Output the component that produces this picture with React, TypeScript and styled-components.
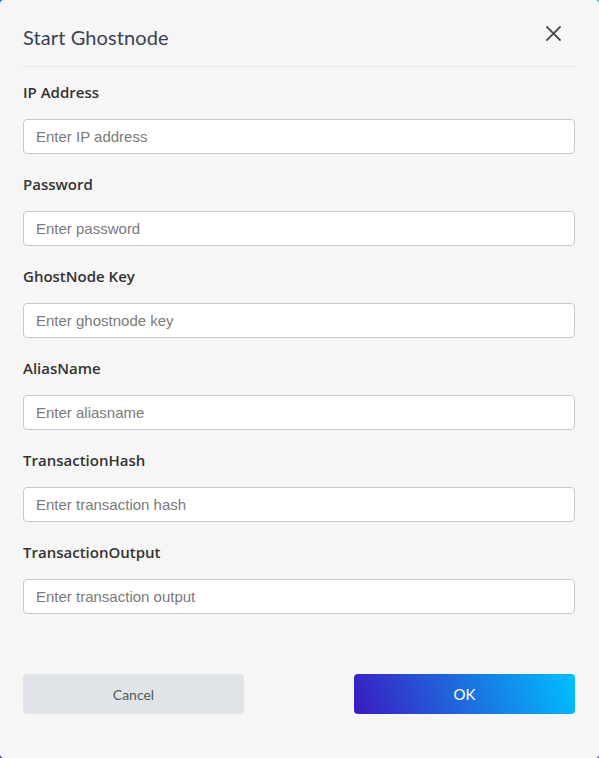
import React from "react";
import styled, { createGlobalStyle } from "styled-components";

const Global = createGlobalStyle`
  html, body { margin: 0; padding: 0; }
  body {
    width: 599px;
    height: 758px;
    overflow: hidden;
    background: linear-gradient(to top right, #3a1bbf, #00c0ff);
  }
  * { box-sizing: border-box; }
`;

const Modal = styled.div`
  width: 599px;
  height: 758px;
  background: #f6f6f6;
  border-radius: 4px;
  padding: 0 24px 0 23px;
  display: flex;
  flex-direction: column;
  font-family: Lato, "Open Sans", sans-serif;
`;

const Header = styled.div`
  height: 67px;
  border-bottom: 1px solid #e5e5e5;
  display: flex;
  align-items: center;
  justify-content: space-between;
  padding-top: 8px;
`;

const Title = styled.h1`
  margin: 0;
  font-size: 20px;
  font-weight: 400;
  color: #3b4055;
  letter-spacing: 0.1px;
`;

const CloseButton = styled.button`
  border: none;
  background: transparent;
  padding: 0;
  width: 16px;
  height: 16px;
  margin-right: 14px;
  margin-top: -8px;
  display: flex;
  align-items: center;
  justify-content: center;
  cursor: pointer;
`;

const Body = styled.div`
  display: flex;
  flex-direction: column;
  padding-top: 15px;
`;

const Field = styled.div`
  display: flex;
  flex-direction: column;
  gap: 17px;
  margin-bottom: 20px;
`;

const Label = styled.label`
  font-family: "Open Sans", Lato, sans-serif;
  font-size: 15px;
  font-weight: 600;
  color: #333333;
  line-height: 20px;
  height: 20px;
`;

const Input = styled.input`
  height: 35px;
  width: 100%;
  border: 1px solid #c9c9c9;
  border-radius: 4px;
  background: #ffffff;
  padding: 0 12px;
  font-family: "Liberation Sans", Arial, sans-serif;
  font-size: 15px;
  color: #333;
  outline: none;
  &::placeholder { color: #7a7a7a; }
`;

const Footer = styled.div`
  display: flex;
  justify-content: space-between;
  margin-top: 40px;
`;

const Button = styled.button<{ $primary?: boolean }>`
  width: 221px;
  height: 40px;
  border: none;
  border-radius: 4px;
  font-family: Lato, "Open Sans", sans-serif;
  font-size: ${(p) => (p.$primary ? "15px" : "14px")};
  color: ${(p) => (p.$primary ? "#ffffff" : "#55575c")};
  background: ${(p) =>
    p.$primary ? "linear-gradient(70deg, #3a1bbf, #00c0ff)" : "#e0e3e8"};
  cursor: pointer;
`;

const fields = [
  { label: "IP Address", placeholder: "Enter IP address" },
  { label: "Password", placeholder: "Enter password" },
  { label: "GhostNode Key", placeholder: "Enter ghostnode key" },
  { label: "AliasName", placeholder: "Enter aliasname" },
  { label: "TransactionHash", placeholder: "Enter transaction hash" },
  { label: "TransactionOutput", placeholder: "Enter transaction output" },
];

export default function App() {
  return (
    <>
      <Global />
      <Modal>
        <Header>
          <Title>Start Ghostnode</Title>
          <CloseButton aria-label="Close">
            <svg width="15" height="15" viewBox="0 0 15 15">
              <path d="M1 1 L14 14 M14 1 L1 14" stroke="#4a4a4a" strokeWidth="1.8" strokeLinecap="square" />
            </svg>
          </CloseButton>
        </Header>
        <Body>
          {fields.map((f) => (
            <Field key={f.label}>
              <Label>{f.label}</Label>
              <Input placeholder={f.placeholder} />
            </Field>
          ))}
        </Body>
        <Footer>
          <Button>Cancel</Button>
          <Button $primary>OK</Button>
        </Footer>
      </Modal>
    </>
  );
}
